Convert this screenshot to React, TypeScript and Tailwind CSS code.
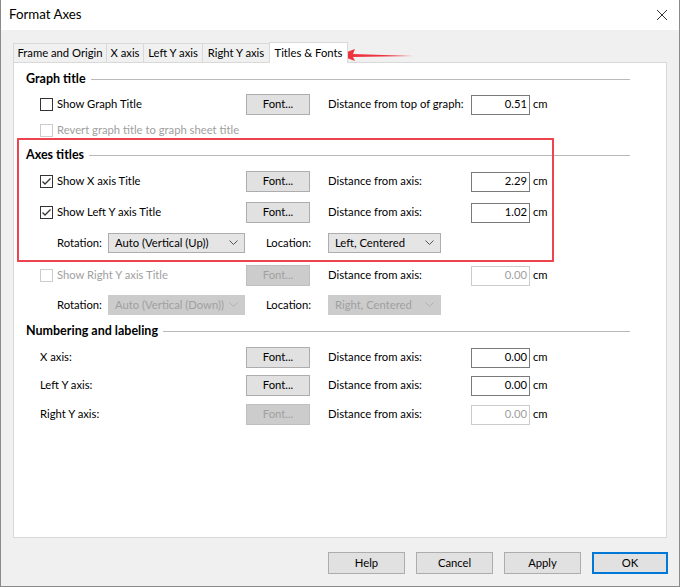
import React from "react";

/* ─── small drawings ─── */
const CheckMark = () => (
  <svg width="11" height="11" viewBox="0 0 11 11">
    <polyline points="1.5 5.5 4 8 9.5 2.5" fill="none" stroke="#333333" strokeWidth="1.3" />
  </svg>
);

const Chevron = ({ disabled }: { disabled?: boolean }) => (
  <svg width="9" height="6" viewBox="0 0 9 6">
    <polyline
      points="0.5 0.5 4.5 4.5 8.5 0.5"
      fill="none"
      stroke={disabled ? "#b0b0b0" : "#555555"}
      strokeWidth="1"
    />
  </svg>
);

const CloseX = () => (
  <svg width="12" height="12" viewBox="0 0 12 12">
    <line x1="1" y1="1" x2="11" y2="11" stroke="#333333" strokeWidth="1" />
    <line x1="11" y1="1" x2="1" y2="11" stroke="#333333" strokeWidth="1" />
  </svg>
);

/* ─── controls ─── */
const CheckBox = ({ checked, disabled }: { checked?: boolean; disabled?: boolean }) => (
  <span
    className={`w-[13px] h-[13px] shrink-0 border bg-white flex items-center justify-center ${
      disabled ? "border-[#cccccc]" : "border-[#333333]"
    }`}
  >
    {checked && <CheckMark />}
  </span>
);

const FontButton = ({ disabled }: { disabled?: boolean }) => (
  <div
    className={`w-[64px] h-[21px] border flex items-center justify-center ${
      disabled
        ? "bg-[#cccccc] border-[#bfbfbf] text-[#a0a0a0]"
        : "bg-[#e1e1e1] border-[#adadad]"
    }`}
  >
    Font...
  </div>
);

const NumBox = ({ value, disabled }: { value: string; disabled?: boolean }) => (
  <div className="flex items-center">
    <div
      className={`w-[59px] h-[20px] border bg-white flex items-center justify-end pr-[2px] ${
        disabled ? "border-[#cccccc] text-[#a0a0a0]" : "border-[#7a7a7a]"
      }`}
    >
      {value}
    </div>
    <span className="ml-[3px]">cm</span>
  </div>
);

const Select = ({
  value,
  width,
  disabled,
}: {
  value: string;
  width: string;
  disabled?: boolean;
}) => (
  <div
    className={`${width} h-[20px] border flex items-center justify-between pl-[6px] pr-[6px] ${
      disabled
        ? "bg-[#cccccc] border-[#cccccc] text-[#a0a0a0]"
        : "bg-[#e5e5e5] border-[#adadad]"
    }`}
  >
    <span>{value}</span>
    <Chevron disabled={disabled} />
  </div>
);

const SectionHeader = ({ title, className }: { title: string; className: string }) => (
  <div className={`flex items-center h-[16px] pl-[12px] pr-[36px] ${className}`}>
    <span className="font-bold text-[12.5px]">{title}</span>
    <span className="flex-1 h-px bg-[#b9b9b9] ml-[5px]" />
  </div>
);

interface RowProps {
  left: React.ReactNode;
  fontDisabled?: boolean;
  label: string;
  value: string;
  valueDisabled?: boolean;
  className: string;
}

const Row = ({ left, fontDisabled, label, value, valueDisabled, className }: RowProps) => (
  <div className={`flex items-center h-[21px] pl-[26px] ${className}`}>
    <div className="w-[206px] flex items-center">{left}</div>
    <FontButton disabled={fontDisabled} />
    <span className="ml-[18px] w-[143px]">{label}</span>
    <NumBox value={value} disabled={valueDisabled} />
  </div>
);

const CheckLabel = ({
  text,
  checked,
  disabled,
}: {
  text: string;
  checked?: boolean;
  disabled?: boolean;
}) => (
  <div className={`flex items-center gap-[4px] ${disabled ? "text-[#a0a0a0]" : ""}`}>
    <CheckBox checked={checked} disabled={disabled} />
    <span>{text}</span>
  </div>
);

const RotationRow = ({
  rotation,
  location,
  disabled,
  className,
}: {
  rotation: string;
  location: string;
  disabled?: boolean;
  className: string;
}) => (
  <div className={`flex items-center h-[20px] pl-[43px] ${className}`}>
    <span className="w-[51px]">Rotation:</span>
    <Select value={rotation} width="w-[137px]" disabled={disabled} />
    <span className="ml-[21px] w-[62px]">Location:</span>
    <Select value={location} width="w-[113px]" disabled={disabled} />
  </div>
);

const tabs = [
  { name: "Frame and Origin", w: "w-[93px]" },
  { name: "X axis", w: "w-[37px]" },
  { name: "Left Y axis", w: "w-[59px]" },
  { name: "Right Y axis", w: "w-[67px]" },
];

export default function App() {
  return (
    <div className="relative w-[680px] h-[587px] flex flex-col whitespace-nowrap border-x border-b border-[#8a8a8a] bg-[#f0f0f0] text-[11.25px] text-black font-[family-name:Lato,sans-serif]">
      {/* Title bar */}
      <div className="h-[30px] bg-white flex items-center justify-between pl-[8px] pr-[11px]">
        <span className="text-[13.3px]">Format Axes</span>
        <CloseX />
      </div>

      {/* Tabs */}
      <div className="flex items-end h-[21px] mt-[11px] ml-[12px]">
        {tabs.map((t) => (
          <div
            key={t.name}
            className={`${t.w} h-[19px] border-t border-l border-[#d9d9d9] flex items-center justify-center`}
          >
            {t.name}
          </div>
        ))}
        <div className="w-[79px] h-[21px] -mb-px z-10 bg-white border-t border-x border-[#d9d9d9] flex items-center justify-center">
          Titles &amp; Fonts
        </div>
      </div>

      {/* Panel */}
      <div className="relative mx-[12px] h-[476px] bg-white border border-[#d9d9d9] flex flex-col">
        <SectionHeader title="Graph title" className="mt-[8px]" />
        <Row
          className="mt-[7px]"
          left={<CheckLabel text="Show Graph Title" />}
          label="Distance from top of graph:"
          value="0.51"
        />
        <div className="flex items-center h-[16px] pl-[26px] mt-[7px]">
          <CheckLabel text="Revert graph title to graph sheet title" disabled />
        </div>

        <SectionHeader title="Axes titles" className="mt-[9px]" />
        <Row
          className="mt-[8px]"
          left={<CheckLabel text="Show X axis Title" checked />}
          label="Distance from axis:"
          value="2.29"
        />
        <Row
          className="mt-[10px]"
          left={<CheckLabel text="Show Left Y axis Title" checked />}
          label="Distance from axis:"
          value="1.02"
        />
        <RotationRow className="mt-[10px]" rotation="Auto (Vertical (Up))" location="Left, Centered" />
        <Row
          className="mt-[12px]"
          left={<CheckLabel text="Show Right Y axis Title" disabled />}
          fontDisabled
          label="Distance from axis:"
          value="0.00"
          valueDisabled
        />
        <RotationRow
          className="mt-[9px]"
          rotation="Auto (Vertical (Down))"
          location="Right, Centered"
          disabled
        />

        <SectionHeader title="Numbering and labeling" className="mt-[8px]" />
        <Row className="mt-[8px]" left={<span>X axis:</span>} label="Distance from axis:" value="0.00" />
        <Row className="mt-[7px]" left={<span>Left Y axis:</span>} label="Distance from axis:" value="0.00" />
        <Row
          className="mt-[8px]"
          left={<span>Right Y axis:</span>}
          fontDisabled
          label="Distance from axis:"
          value="0.00"
          valueDisabled
        />

        {/* red annotation box */}
        <div className="absolute left-[3px] top-[75px] w-[537px] h-[124px] border-2 border-[#ee4450] pointer-events-none" />
      </div>

      {/* Bottom buttons */}
      <div className="flex justify-end gap-[11px] pr-[11px] mt-[14px]">
        {["Help", "Cancel", "Apply"].map((b) => (
          <div
            key={b}
            className="w-[77px] h-[22px] bg-[#e1e1e1] border border-[#adadad] flex items-center justify-center"
          >
            {b}
          </div>
        ))}
        <div className="w-[76px] h-[22px] bg-[#e1e1e1] border-2 border-[#0078d7] flex items-center justify-center">
          OK
        </div>
      </div>

      {/* red arrow annotation */}
      <svg className="absolute left-[338px] top-[47px]" width="76" height="16" viewBox="0 0 76 16">
        <polygon points="0,8 16,2 14,7 74,9 14,10 16,14" fill="#ee3340" />
      </svg>
    </div>
  );
}
